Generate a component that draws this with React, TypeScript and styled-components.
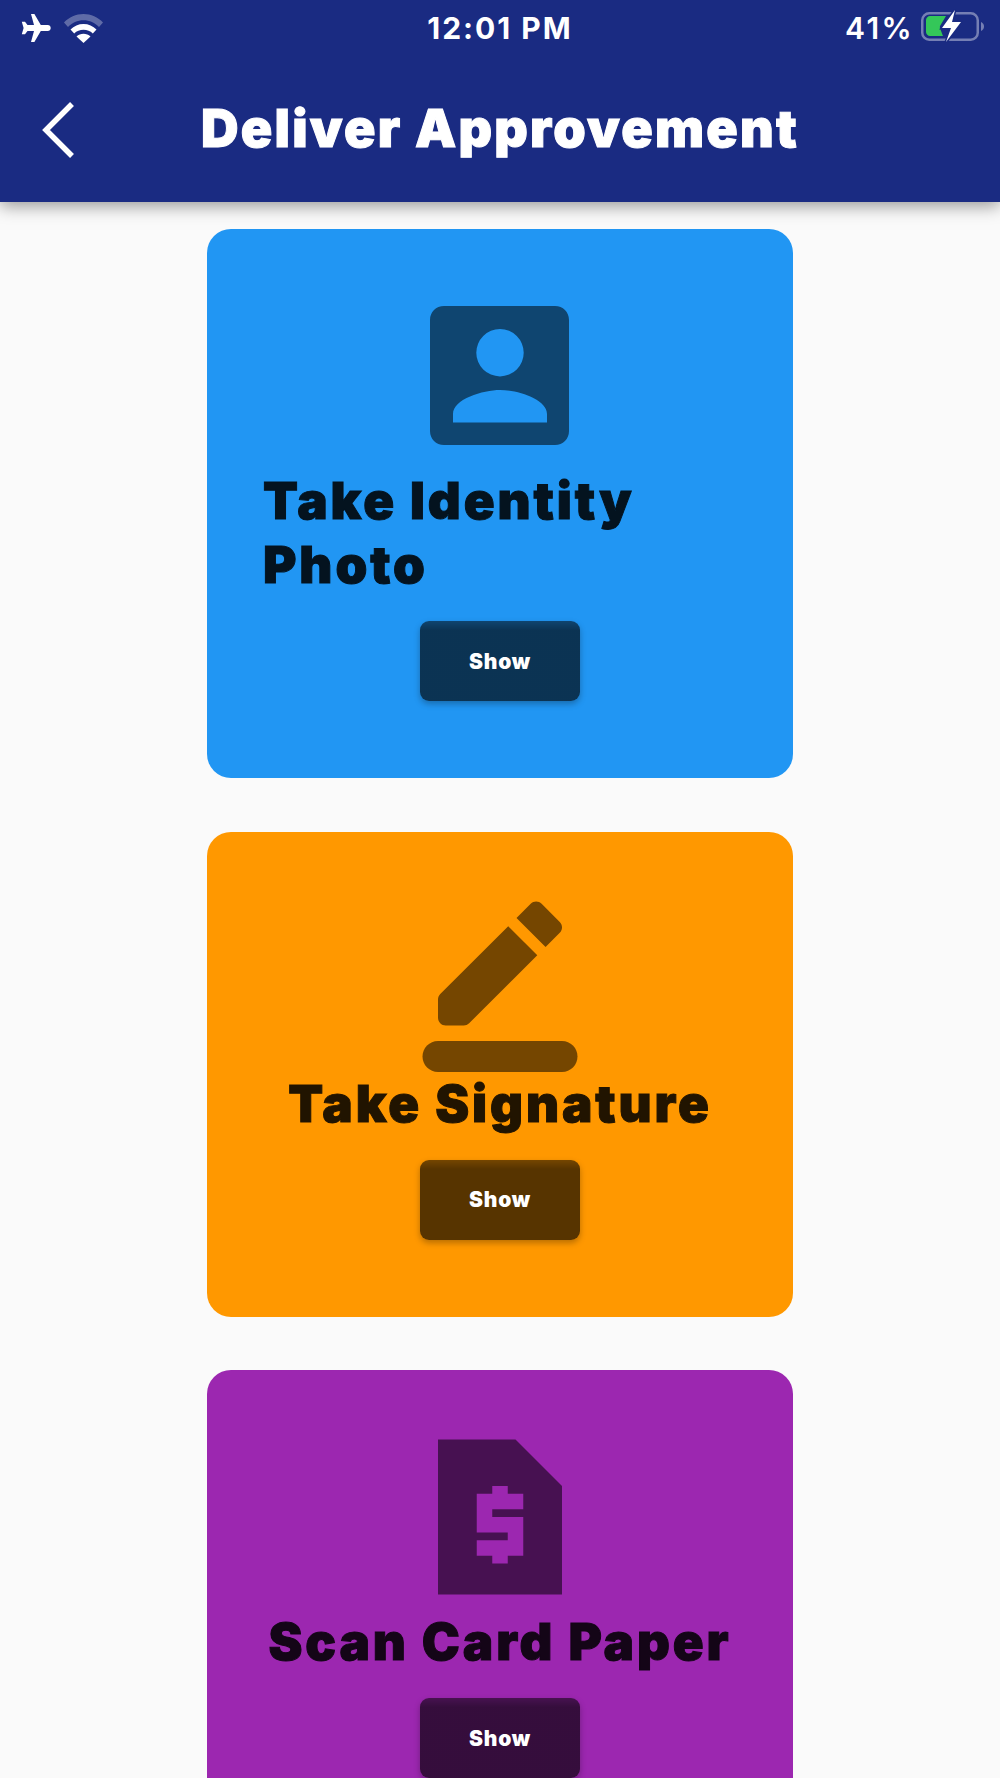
import React from 'react';
import styled, { createGlobalStyle } from 'styled-components';

const GlobalStyle = createGlobalStyle`
  html, body {
    margin: 0;
    padding: 0;
    background: #fafafa;
    font-family: 'Inter', 'Liberation Sans', sans-serif;
  }
`;

const Page = styled.div`
  width: 1000px;
  height: 1778px;
  overflow: hidden;
  background: #fafafa;
`;

const AppBar = styled.header`
  height: 202px;
  background: #1a2b82;
  color: #fff;
  box-shadow: 0 4px 16px rgba(0, 0, 0, 0.4);
  position: relative;
  z-index: 1;
`;

const StatusBar = styled.div`
  height: 56px;
  display: grid;
  grid-template-columns: 1fr auto 1fr;
  align-items: center;
`;

const StatusLeft = styled.div`
  display: flex;
  align-items: center;
  gap: 13px;
  padding-left: 21px;
`;

const Time = styled.div`
  font-size: 30px;
  font-weight: 700;
  letter-spacing: 2px;
`;

const StatusRight = styled.div`
  display: flex;
  align-items: center;
  justify-content: flex-end;
  gap: 7px;
  padding-right: 15px;
`;

const Percent = styled.div`
  font-size: 30px;
  font-weight: 600;
  letter-spacing: 2.4px;
`;

const NavRow = styled.div`
  height: 146px;
  display: grid;
  grid-template-columns: 1fr auto 1fr;
  align-items: start;
`;

const BackButton = styled.div`
  padding: 46px 0 0 41px;
  display: flex;
`;

const Heading = styled.h1`
  margin: 41px 0 0;
  font-size: 52px;
  line-height: 64px;
  font-weight: 900;
  letter-spacing: 2.2px;
  -webkit-text-stroke: 1px #fff;
`;

const Content = styled.main`
  padding-top: 27px;
  display: flex;
  flex-direction: column;
  align-items: center;
  gap: 53.5px;
`;

const Card = styled.section<{ $color: string }>`
  width: 586px;
  box-sizing: border-box;
  padding: 54px 56px 77px;
  border-radius: 24px;
  background: ${props => props.$color};
  display: flex;
  flex-direction: column;
  align-items: center;
  flex-shrink: 0;
`;

const CardIcon = styled.svg`
  width: 186px;
  height: 186px;
  display: block;
  fill: rgba(0, 0, 0, 0.54);
`;

const CardTitle = styled.h2<{ $ink: string; $wrapped?: boolean }>`
  margin: 0;
  width: 100%;
  text-align: ${props => (props.$wrapped ? 'left' : 'center')};
  font-size: 51px;
  line-height: 64px;
  font-weight: 900;
  letter-spacing: 2.9px;
  color: ${props => props.$ink};
  -webkit-text-stroke: 1px ${props => props.$ink};
`;

const ShowButton = styled.button`
  margin-top: 24px;
  width: 160px;
  height: 80px;
  border: none;
  border-radius: 9px;
  padding: 0;
  background: linear-gradient(rgba(0, 0, 0, 0.54), rgba(0, 0, 0, 0.66) 9px);
  box-shadow: 0 3px 6px rgba(0, 0, 0, 0.28);
  color: #fff;
  font-family: inherit;
  font-size: 21px;
  font-weight: 900;
  letter-spacing: 0.8px;
  flex-shrink: 0;
`;

const AirplaneIcon = () => (
  <svg width="30" height="28" viewBox="0 0 30 28" fill="#fff">
    <path d="M10 0h3.4l6.4 11h7c1.6 0 2.9 1.3 2.9 3s-1.300 3-2.900 3h-7L13.400 28H10l3-11H6.500l-2.500 3.300H.8L2.600 14 .8 7.700H4L6.500 11H13z" />
  </svg>
);

const WifiIcon = () => (
  <svg width="39" height="29" viewBox="0 0 39 29" fill="#fff">
    <path d="M0 8.500C5 3.200 12 0 19.500 0S34 3.200 39 8.500l-4 4.500C31 8.800 25.500 6.300 19.500 6.300S8 8.800 4 13z" opacity="0.3" />
    <path d="M6.500 15.500C10 12 14.500 10 19.500 10s9.500 2 13 5.500l-3.700 4c-2.500-2.400-5.700-3.700-9.300-3.700s-6.800 1.300-9.300 3.700z" />
    <path d="M12.500 22.500c1.900-1.700 4.300-2.700 7-2.700s5.100 1 7 2.700l-7 6.500z" />
  </svg>
);

const BatteryIcon = () => (
  <svg width="64" height="32" viewBox="0 0 64 32" overflow="visible">
    <rect x="1.250" y="1.250" width="55.500" height="26.500" rx="7" fill="none" stroke="#fff" strokeOpacity="0.4" strokeWidth="2.500" />
    <path d="M60 10c1.800.8 3 2.400 3 4.500s-1.200 3.700-3 4.500z" fill="#fff" fillOpacity="0.4" />
    <path d="M9 4h16l-6 10c-.5 2 .5 3 3 10H9c-2 0-4-2-4-4V8c0-2 2-4 4-4z" fill="#34c759" />
    <path d="M34-2L21 16h9l-5 14 15-20h-9z" fill="#1a2b82" stroke="#1a2b82" strokeWidth="3" />
    <path d="M34-2L21 16h9l-5 14 15-20h-9z" fill="#fff" />
  </svg>
);

const BackIcon = () => (
  <svg width="34" height="56" viewBox="0 0 34 56" fill="none" stroke="#fff" strokeWidth="5.500">
    <path d="M31 2L5 28l26 26" />
  </svg>
);

const IdentityIcon = () => (
  <CardIcon viewBox="0 0 186 186">
    <path
      fillRule="evenodd"
      d="M37 23h111c8 0 14 6 14 14v111c0 8-6 14-14 14H37c-8 0-14-6-14-14V37c0-8 6-14 14-14zm56 23a23.700 23.700 0 1 0 0 47.400 23.700 23.700 0 0 0 0-47.400zm-47 93.500h94V131c0-15-30-24-47-24s-47 9-47 24z"
    />
  </CardIcon>
);

const SignatureIcon = () => (
  <CardIcon viewBox="0 0 24 24">
    <path d="M20 24H4c-1.100 0-2-.9-2-2s.9-2 2-2h16c1.100 0 2 .9 2 2s-.9 2-2 2z" />
    <path d="M13.060 5.190l3.750 3.750L8.020 17.710a1 1 0 0 1-.71.29H5c-.55 0-1-.45-1-1v-2.340c0-.27.11-.52.29-.71l8.770-8.760z" />
    <path d="M17.880 7.870l-3.750-3.750 1.830-1.830c.39-.39 1.020-.39 1.410 0l2.340 2.340c.39.39.39 1.020 0 1.410l-1.830 1.830z" />
  </CardIcon>
);

const ReceiptIcon = () => (
  <CardIcon viewBox="0 0 24 24">
    <path
      fillRule="evenodd"
      d="M14 2H4v20h16V8l-6-6zm1 9h-4v1h4v5h-2v1h-2v-1H9v-2h4v-1H9V9h2V8h2v1h2v2z"
    />
  </CardIcon>
);

const App = () => {
  return (
    <Page>
      <GlobalStyle />
      <AppBar>
        <StatusBar>
          <StatusLeft>
            <AirplaneIcon />
            <WifiIcon />
          </StatusLeft>
          <Time>12:01 PM</Time>
          <StatusRight>
            <Percent>41%</Percent>
            <BatteryIcon />
          </StatusRight>
        </StatusBar>
        <NavRow>
          <BackButton>
            <BackIcon />
          </BackButton>
          <Heading>Deliver Approvement</Heading>
        </NavRow>
      </AppBar>
      <Content>
        <Card $color="#2196f3">
          <IdentityIcon />
          <CardTitle $ink="#04131f" $wrapped>Take Identity Photo</CardTitle>
          <ShowButton>Show</ShowButton>
        </Card>
        <Card $color="#ff9800">
          <SignatureIcon />
          <CardTitle $ink="#211400">Take Signature</CardTitle>
          <ShowButton>Show</ShowButton>
        </Card>
        <Card $color="#9c27b0">
          <ReceiptIcon />
          <CardTitle $ink="#140517">Scan Card Paper</CardTitle>
          <ShowButton>Show</ShowButton>
        </Card>
      </Content>
    </Page>
  );
};

export default App;
